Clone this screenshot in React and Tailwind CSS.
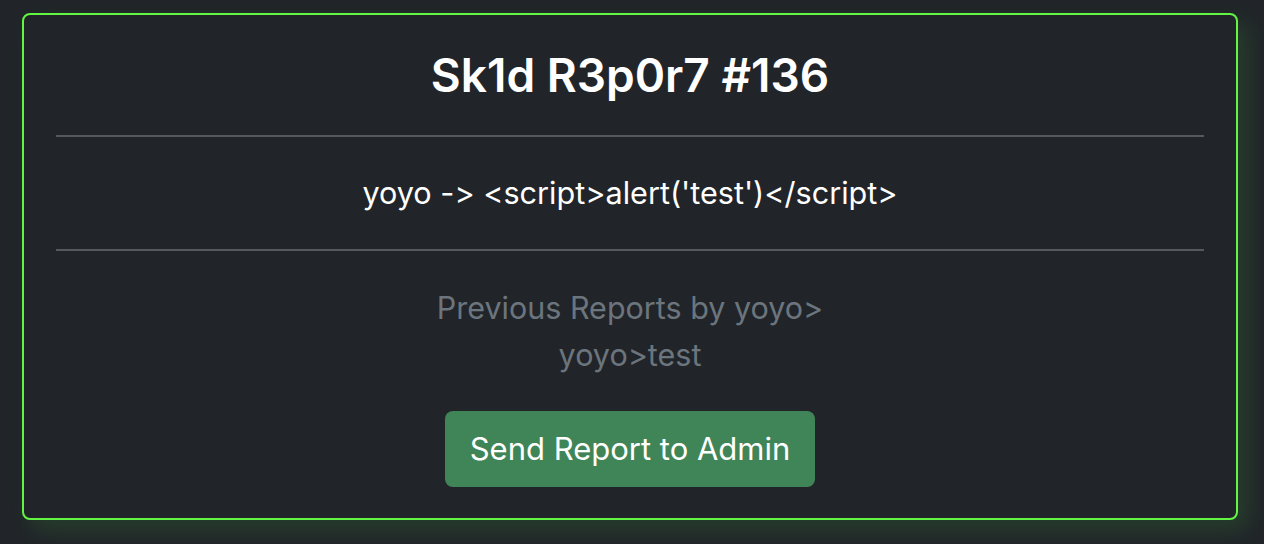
export default function App() {
  return (
    <div className="min-h-[544px] bg-[#212529] pt-[13px] pl-[22px] pr-[26px] font-['Inter',sans-serif] [font-feature-settings:'calt'_0] overflow-hidden">
      <div className="rounded-[8px] border-2 border-[#62f542] bg-[#212529] px-8 text-center shadow-[10px_10px_22px_rgba(70,190,60,0.16)]">
        {/* Title */}
        <h1 className="py-8 text-[46px] font-semibold leading-[56px] text-white">Sk1d R3p0r7 #136</h1>
        <div className="h-[2px] bg-[#55585c]" />

        {/* Report */}
        <p className="py-[36px] text-[30.6px] leading-[40px] text-white">
          {"yoyo -> <script>alert('test')</script>"}
        </p>
        <div className="h-[2px] bg-[#55585c]" />

        {/* Previous */}
        <div className="pt-[33px] text-[30.5px] leading-[47px] text-[#6c757d]">
          <p>Previous Reports by yoyo&gt;</p>
          <p>yoyo&gt;test</p>
        </div>
        <div className="pt-[33px] pb-[31px]">
          <button className="h-[76px] rounded-[8px] bg-[#408558] px-[25px] text-[31px] text-white">
            Send Report to Admin
          </button>
        </div>
      </div>
    </div>
  );
}
